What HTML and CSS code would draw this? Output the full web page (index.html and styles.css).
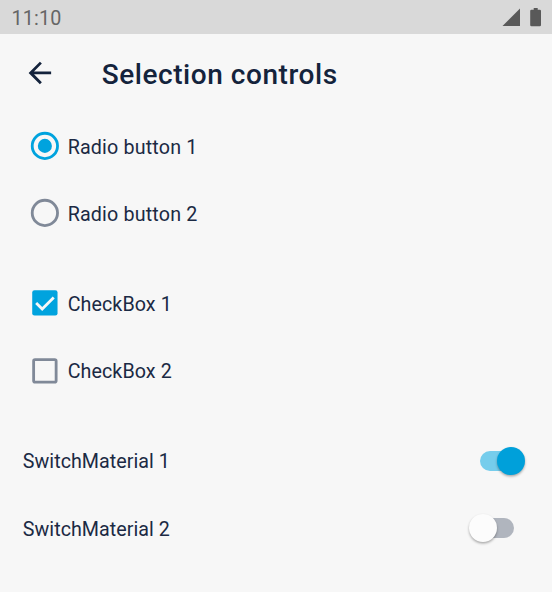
FILE: index.html
```
<!DOCTYPE html>
<html lang="en">
<head>
<meta charset="utf-8">
<title>Selection controls</title>
<link rel="stylesheet" href="styles.css">
</head>
<body>
<div class="status">
  <span class="time">11:10</span>
  <svg class="status-icons" width="42" height="20" viewBox="0 0 42 20"><path d="M2.5 18H20V.5z"/><path d="M33.7 0h4v1.8h2.1q1.2 0 1.2 1.2v14q0 1.2-1.2 1.2h-8.4q-1.2 0-1.2-1.2V3q0-1.2 1.2-1.2h2.3z"/></svg>
</div>
<header class="toolbar">
  <svg class="back" viewBox="0 0 24 24"><path d="M20 11H7.83l5.59-5.59L12 4l-8 8 8 8 1.41-1.41L7.83 13H20z"/></svg>
  <h1 class="title">Selection controls</h1>
</header>
<main>
  <section class="group radios">
    <label class="row"><svg class="control on" viewBox="0 0 24 24"><circle class="ring" cx="12" cy="12" r="9"/><circle cx="12" cy="12" r="5"/></svg><span class="text first">Radio button 1</span></label>
    <label class="row"><svg class="control" viewBox="0 0 24 24"><circle class="ring" cx="12" cy="12" r="9"/></svg><span class="text">Radio button 2</span></label>
  </section>
  <section class="group">
    <label class="row"><svg class="control on" viewBox="0 0 24 24"><rect x="3" y="3" width="18" height="18" rx="1.6"/><path class="tick" d="M5.8 12.1l4.3 4.3 8.2-8.2"/></svg><span class="text">CheckBox 1</span></label>
    <label class="row"><svg class="control" viewBox="0 0 24 24"><rect class="ring" x="4" y="4" width="16" height="16" rx="1"/></svg><span class="text">CheckBox 2</span></label>
  </section>
  <section class="group switches">
    <label class="row"><span class="text">SwitchMaterial 1</span><span class="switch checked"><span class="thumb"></span></span></label>
    <label class="row"><span class="text">SwitchMaterial 2</span><span class="switch"><span class="thumb"></span></span></label>
  </section>
</main>
</body>
</html>
```
FILE: styles.css
```
* { box-sizing: border-box; }
body {
  margin: 0;
  height: 592px;
  overflow: hidden;
  background: #f7f7f7;
  color: #1b2a44;
  font-family: Roboto, sans-serif;
}
.status {
  display: flex;
  justify-content: space-between;
  height: 33.75px;
  padding: 8px 10.3px 0 11.5px;
  background: #d9d9d9;
  color: #666;
}
.time { margin-top: 1px; font-size: 19.7px; line-height: 20px; letter-spacing: .2px; }
.status-icons { fill: #595959; }
.toolbar {
  display: flex;
  align-items: center;
  height: 78.75px;
  padding-left: 22.5px;
}
.back { width: 33.75px; height: 33.75px; fill: #14233c; }
.title {
  margin: 4px 0 0 45.5px;
  color: #14233c;
  font-size: 28px;
  font-weight: 500;
  line-height: 34px;
  letter-spacing: .55px;
}
.group { margin-bottom: 22.5px; }
.row {
  display: flex;
  align-items: center;
  height: 67.5px;
  padding-left: 28.3px;
}
.control { width: 33.75px; height: 33.75px; margin: 0 5.6px .8px 0; fill: none; }
.control.on { fill: #00a3de; }
.ring { fill: none; stroke: #808998; stroke-width: 2; }
.on .ring { stroke: #00a3de; }
.tick { fill: none; stroke: #f7f7f7; stroke-width: 2; }
.text { font-size: 19.7px; line-height: 24px; margin-top: 2px; letter-spacing: .08px; }
.radios .text { letter-spacing: .17px; }
.text.first { margin-top: 3.5px; }
.switches .row { justify-content: space-between; padding: 0 38px 0 22.8px; }
.switches .text { letter-spacing: .03px; }
.switch {
  display: flex;
  align-items: center;
  width: 34px;
  height: 19.7px;
  margin-bottom: 1px;
  border-radius: 10px;
  background: #b0b5be;
}
.thumb {
  flex: none;
  width: 28px;
  height: 28px;
  margin-left: -11px;
  border-radius: 50%;
  background: #fcfcfc;
  box-shadow: 0 1.5px 2.5px rgba(0, 0, 0, .32);
}
.checked { background: #76cdec; }
.checked .thumb { margin-left: 17px; background: #00a0da; }
```
